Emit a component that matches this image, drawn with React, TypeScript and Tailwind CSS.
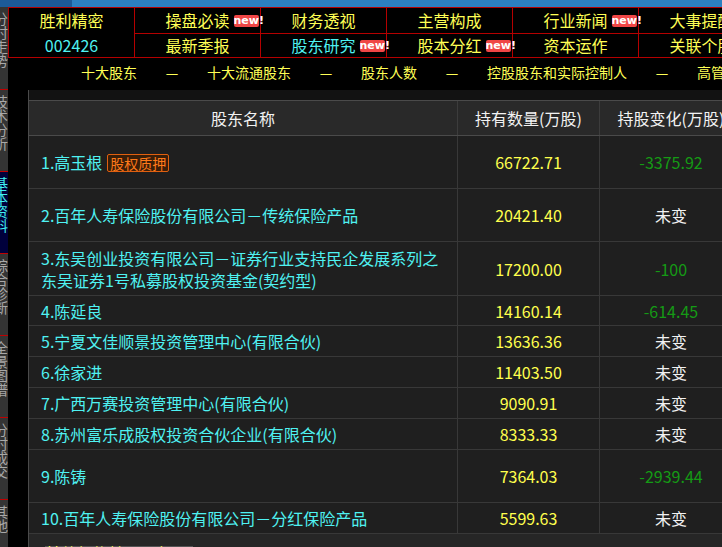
import type { ReactNode } from 'react';

type Row = {
  name: ReactNode;
  tag?: string;
  qty: string;
  chg: string;
  h: string;
};

const rows: Row[] = [
  { name: '1.高玉根', tag: '股权质押', qty: '66722.71', chg: '-3375.92', h: 'h-[53px]' },
  { name: '2.百年人寿保险股份有限公司－传统保险产品', qty: '20421.40', chg: '未变', h: 'h-[53px]' },
  {
    name: (
      <>
        3.东吴创业投资有限公司－证券行业支持民企发展系列之
        <br />
        东吴证券1号私募股权投资基金(契约型)
      </>
    ),
    qty: '17200.00',
    chg: '-100',
    h: 'h-[54px]',
  },
  { name: '4.陈延良', qty: '14160.14', chg: '-614.45', h: 'h-[30px]' },
  { name: '5.宁夏文佳顺景投资管理中心(有限合伙)', qty: '13636.36', chg: '未变', h: 'h-[31px]' },
  { name: '6.徐家进', qty: '11403.50', chg: '未变', h: 'h-[31px]' },
  { name: '7.广西万赛投资管理中心(有限合伙)', qty: '9090.91', chg: '未变', h: 'h-[31px]' },
  { name: '8.苏州富乐成股权投资合伙企业(有限合伙)', qty: '8333.33', chg: '未变', h: 'h-[31px]' },
  { name: '9.陈铸', qty: '7364.03', chg: '-2939.44', h: 'h-[53px]' },
  { name: '10.百年人寿保险股份有限公司－分红保险产品', qty: '5599.63', chg: '未变', h: 'h-[31px]' },
];

const sideTabs = ['分时走势', '技术分析', '基本资料', '综合诊断', '全景图谱', '分时成交', '其他'];

const topCells: { top: string; topNew?: boolean; bottom: string; bottomNew?: boolean; bottomActive?: boolean }[] = [
  { top: '操盘必读', topNew: true, bottom: '最新季报' },
  { top: '财务透视', bottom: '股东研究', bottomNew: true, bottomActive: true },
  { top: '主营构成', bottom: '股本分红', bottomNew: true },
  { top: '行业新闻', topNew: true, bottom: '资本运作' },
  { top: '大事提醒', bottom: '关联个股' },
];

const subNav = ['十大股东', '十大流通股东', '股东人数', '控股股东和实际控制人', '高管持股'];

function NewBadge() {
  return (
    <span className="absolute left-full top-[3px] ml-[4px] h-[12px] w-[25px] rounded-[2px] bg-[#f04646] text-center text-[11px] font-bold leading-[12px] text-white font-['DejaVu_Sans',sans-serif]">
      new!
    </span>
  );
}

function NavCell({ text, isNew, active }: { text: string; isNew?: boolean; active?: boolean }) {
  return (
    <div className="flex items-center justify-center bg-black pb-[1px]">
      <span className={`relative ${active ? 'text-[#4ff2f2]' : 'text-[#ffff55]'}`}>
        {text}
        {isNew && <NewBadge />}
      </span>
    </div>
  );
}

export default function App() {
  return (
    <div className="flex h-[547px] w-[722px] flex-col overflow-hidden bg-black text-[16px] font-['Noto_Sans_CJK_SC',sans-serif]">
      {/* top strip */}
      <div className="flex h-[7px] shrink-0">
        <div className="w-[72px] bg-[#1c5a98]" />
        <div className="flex-1 bg-[#2c80c0]" />
      </div>

      <div className="flex min-h-0 flex-1">
        {/* left tabs */}
        <div className="flex w-[8px] shrink-0 flex-col overflow-hidden bg-[#343434]">
          {sideTabs.map((t, i) => (
            <div
              key={t}
              className={`h-[82px] shrink-0 overflow-hidden border-t border-[#c00000] pt-[5px] text-[14px] leading-[14px] [writing-mode:vertical-rl] ${
                i === 2 ? 'bg-[#00003c] text-[#3ff0f0]' : 'text-[#a8a8a8]'
              } ${i === 0 ? 'border-t-0' : ''}`}
            >
              {t}
            </div>
          ))}
        </div>

        <div className="min-w-0 flex-1 overflow-hidden">
          {/* header grid */}
          <div className="grid w-[764px] grid-cols-[125px_125px_125px_125px_125px_125px] grid-rows-[25px_23px] gap-px border border-[#b40000] bg-[#b40000] leading-none">
            <div className="row-span-2 flex flex-col bg-black">
              <div className="flex h-[25px] items-center justify-center pb-[1px] text-[#ffff55]">胜利精密</div>
              <div className="flex h-[24px] items-center justify-center text-[#4ff2f2]">002426</div>
            </div>
            {topCells.map((c) => (
              <NavCell key={c.top} text={c.top} isNew={c.topNew} />
            ))}
            {topCells.map((c) => (
              <NavCell key={c.bottom} text={c.bottom} isNew={c.bottomNew} active={c.bottomActive} />
            ))}
          </div>

          {/* sub nav */}
          <div className="flex h-[28px] items-center gap-[28px] whitespace-nowrap pl-[73px] text-[14px] text-[#ffff55]">
            {subNav.map((s, i) => (
              <div key={s} className="flex items-center gap-[28px]">
                {i > 0 && <span className="inline-block w-[14px] text-center">—</span>}
                <span>{s}</span>
              </div>
            ))}
          </div>

          {/* table */}
          <div className="mt-[4px] ml-[20px] w-[714px] border-l border-[#4a4a4a]">
            <div className="h-[10px] bg-[#121212]" />
            <div className="flex h-[36px] border-y border-[#4a4a4a] bg-[#292929] text-[#f2f2f2]">
              <div className="flex w-[429px] shrink-0 items-center justify-center border-r border-[#3c3c3c]">股东名称</div>
              <div className="flex w-[142px] shrink-0 items-center justify-center border-r border-[#3c3c3c]">持有数量(万股)</div>
              <div className="flex w-[142px] shrink-0 items-center justify-center whitespace-nowrap">持股变化(万股)</div>
            </div>
            {rows.map((r, i) => (
              <div key={i} className={`flex ${r.h} border-b border-[#383838] bg-[#1f1f1f]`}>
                <div className="flex w-[429px] shrink-0 items-center border-r border-[#383838] pl-[12px] leading-[22px] text-[#4ff2f2]">
                  <div>
                    {r.name}
                    {r.tag && (
                      <span className="ml-[5px] inline-block rounded-[2px] border border-[#e06010] bg-[#3a1e08] px-[2px] text-[14px] leading-[16px] text-[#ff7a1a]">
                        {r.tag}
                      </span>
                    )}
                  </div>
                </div>
                <div className="flex w-[142px] shrink-0 items-center justify-center border-r border-[#383838] text-[#ffff4d]">
                  {r.qty}
                </div>
                <div
                  className={`flex w-[142px] shrink-0 items-center justify-center ${
                    r.chg === '未变' ? 'text-[#f2f2f2]' : 'text-[#159a15]'
                  }`}
                >
                  {r.chg}
                </div>
              </div>
            ))}
            <div className="h-[20px] bg-[#262626] pl-[16px] pt-[7px]">
              <span className="inline-block border-t border-[#555] leading-[12px] text-[#ffff55]">其他机构持股明细 ∨</span>
            </div>
          </div>
        </div>
      </div>
    </div>
  );
}
